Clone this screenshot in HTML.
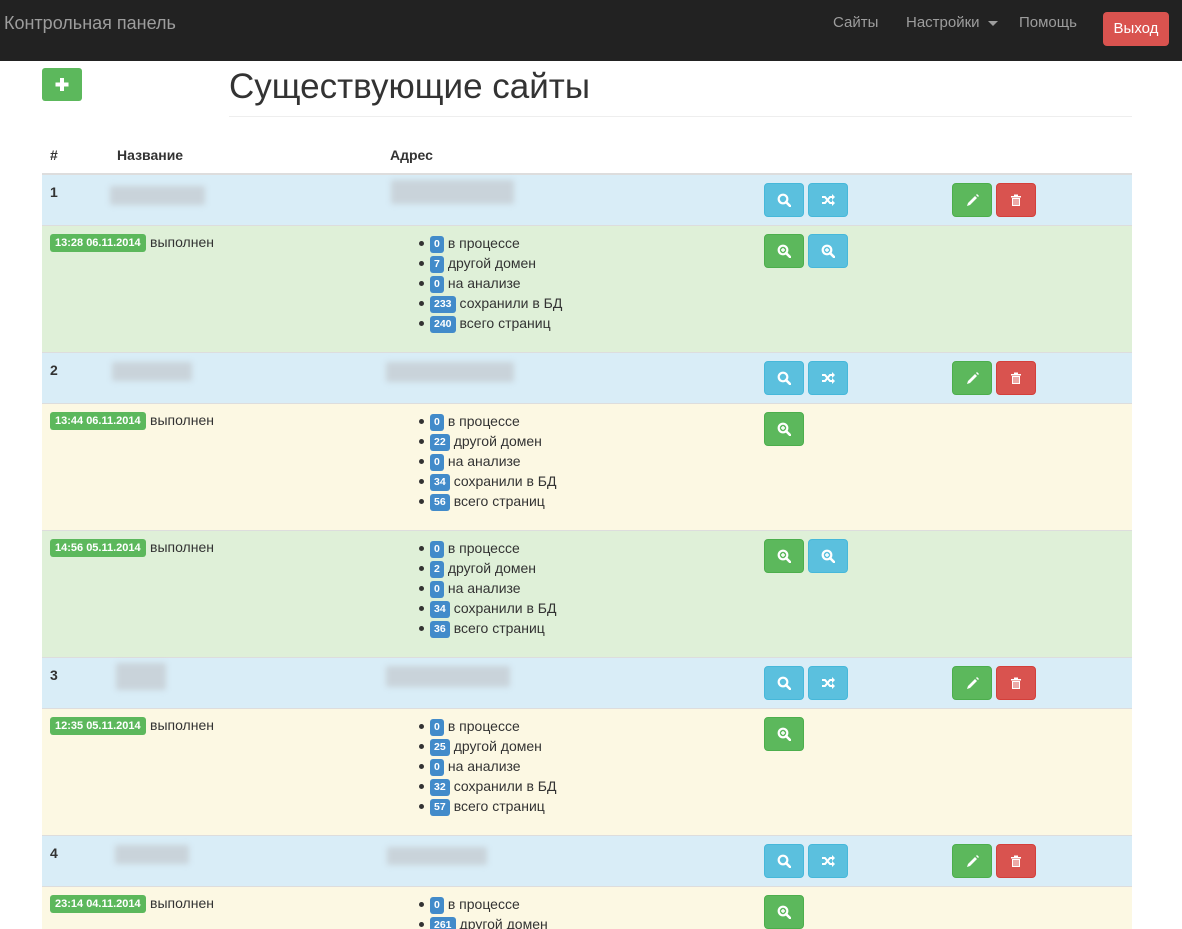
<!DOCTYPE html>
<html><head><meta charset="utf-8"><style>
*{box-sizing:border-box;margin:0;padding:0}
html,body{width:1182px;height:929px;overflow:hidden}
body{background:#fff;font-family:"Liberation Sans",Arial,sans-serif;font-size:14px;color:#333;position:relative}
.nav{position:absolute;left:0;top:0;width:1182px;height:61px;background:#222}
.nav .brand{position:absolute;left:4px;top:13px;font-size:18px;color:#9d9d9d}
.nav a{position:absolute;top:14px;color:#9d9d9d;font-size:15px}
.exit{position:absolute;left:1103px;top:12px;width:66px;height:34px;background:#d9534f;border-radius:4px;color:#fff;font-size:15px;text-align:center;line-height:34px}
.caret{display:inline-block;border-top:5px solid #9d9d9d;border-left:5px solid transparent;border-right:5px solid transparent;vertical-align:middle;margin-left:4px}
.add{position:absolute;left:42px;top:68px;width:40px;height:33px;background:#5cb85c;border-radius:3px}
h1{position:absolute;left:229px;top:67px;font-size:35px;font-weight:normal;color:#333}
.hr{position:absolute;left:229px;top:116px;width:903px;height:1px;background:#eee}
.th{position:absolute;top:147px;font-weight:bold}
.thline{position:absolute;left:42px;top:173px;width:1090px;height:2px;background:#ddd}
.row{position:absolute;left:42px;width:1090px;border-top:1px solid #ddd}
.info{background:#d9edf7;height:51px}
.ok{background:#dff0d8;height:127px}
.warn{background:#fcf8e3;height:127px}
.num{position:absolute;left:8px;top:9px;font-weight:bold}
.blur{position:absolute;background:#c9d3da;filter:blur(3px);border-radius:2px}
.btn{position:absolute;width:40px;height:34px;border-radius:4px;display:flex;align-items:center;justify-content:center}
.bi{background:#5bc0de;border:1px solid #46b8da}
.bs{background:#5cb85c;border:1px solid #4cae4c}
.bd{background:#d9534f;border:1px solid #d43f3a}
.lab{position:absolute;left:8px;top:8px;background:#5cb85c;color:#fff;font-weight:bold;font-size:11px;padding:3px 5px 3px;border-radius:3px;line-height:12px}
.st{position:absolute;left:108px;top:8px}
ul{position:absolute;left:388px;top:7px;list-style:none}
li{height:20px;line-height:20px;position:relative}
li:before{content:"";position:absolute;left:-11px;top:8px;width:5px;height:5px;border-radius:50%;background:#333}
.b{display:inline-block;background:#428bca;color:#fff;font-weight:bold;font-size:10.5px;border-radius:3px;padding:0 4px;height:17px;line-height:17px;margin-right:4px;vertical-align:1px}
</style></head><body>
<svg width="0" height="0" style="position:absolute"><defs>
<g id="srch"><circle cx="6" cy="6" r="4.3" fill="none" stroke="#fff" stroke-width="2.2"/><path d="M9 9l4 4" stroke="#fff" stroke-width="2.6" stroke-linecap="round"/></g>
<g id="zin"><circle cx="6" cy="6" r="4.3" fill="none" stroke="#fff" stroke-width="2.2"/><path d="M9 9l4 4" stroke="#fff" stroke-width="2.6" stroke-linecap="round"/><path d="M6 4v4M4 6h4" stroke="#fff" stroke-width="1.4"/></g>
<g id="shuf"><path d="M1 4h3l5 6h3M1 10h3l5-6h3" stroke="#fff" stroke-width="2" fill="none"/><path d="M11 1l3 3-3 3zM11 7l3 3-3 3z" fill="#fff"/></g>
<g id="pen"><path d="M2 13l1-3 7-7 2 2-7 7z" fill="#fff"/><path d="M11 2l1-1 2 2-1 1z" fill="#fff"/></g>
<g id="trash"><path d="M2 3h10v1.5H2zM5 1.5h4V3H5z" fill="#fff"/><path d="M3 5h8v8H3z" fill="#fff"/><path d="M5 6v6M7 6v6M9 6v6" stroke="#d9534f" stroke-width="1"/></g>
</defs></svg>

<div class="nav"><div class="brand">Контрольная панель</div>
<a style="left:833px">Сайты</a><a style="left:906px">Настройки <span class="caret"></span></a><a style="left:1019px">Помощь</a>
<div class="exit">Выход</div></div>

<div class="add"><svg width="40" height="33"><path d="M20 10v13M13.5 16.5h13" stroke="#fff" stroke-width="4"/></svg></div>
<h1>Существующие сайты</h1><div class="hr"></div>
<div class="th" style="left:50px">#</div><div class="th" style="left:117px">Название</div><div class="th" style="left:390px">Адрес</div>
<div class="thline"></div>

<div class="row info" style="top:174px"><div class="num">1</div><div class="blur" style="left:68px;top:11px;width:95px;height:19px"></div><div class="blur" style="left:349px;top:5px;width:123px;height:24px"></div>
<div class="btn bi" style="left:722px;top:8px"><svg width="14" height="14"><use href="#srch"/></svg></div>
<div class="btn bi" style="left:766px;top:8px"><svg width="15" height="14"><use href="#shuf"/></svg></div>
<div class="btn bs" style="left:910px;top:8px"><svg width="14" height="14"><use href="#pen"/></svg></div>
<div class="btn bd" style="left:954px;top:8px"><svg width="14" height="14"><use href="#trash"/></svg></div></div>
<div class="row ok" style="top:225px"><span class="lab">13:28 06.11.2014</span><span class="st">выполнен</span>
<ul><li><span class="b">0</span>в процессе</li><li><span class="b">7</span>другой домен</li><li><span class="b">0</span>на анализе</li><li><span class="b">233</span>сохранили в БД</li><li><span class="b">240</span>всего страниц</li></ul>
<div class="btn bs" style="left:722px;top:8px"><svg width="14" height="14"><use href="#zin"/></svg></div>
<div class="btn bi" style="left:766px;top:8px"><svg width="14" height="14"><use href="#zin"/></svg></div></div>

<div class="row info" style="top:352px"><div class="num">2</div><div class="blur" style="left:70px;top:9px;width:80px;height:19px"></div><div class="blur" style="left:344px;top:9px;width:128px;height:20px"></div>
<div class="btn bi" style="left:722px;top:8px"><svg width="14" height="14"><use href="#srch"/></svg></div>
<div class="btn bi" style="left:766px;top:8px"><svg width="15" height="14"><use href="#shuf"/></svg></div>
<div class="btn bs" style="left:910px;top:8px"><svg width="14" height="14"><use href="#pen"/></svg></div>
<div class="btn bd" style="left:954px;top:8px"><svg width="14" height="14"><use href="#trash"/></svg></div></div>
<div class="row warn" style="top:403px"><span class="lab">13:44 06.11.2014</span><span class="st">выполнен</span>
<ul><li><span class="b">0</span>в процессе</li><li><span class="b">22</span>другой домен</li><li><span class="b">0</span>на анализе</li><li><span class="b">34</span>сохранили в БД</li><li><span class="b">56</span>всего страниц</li></ul>
<div class="btn bs" style="left:722px;top:8px"><svg width="14" height="14"><use href="#zin"/></svg></div></div>
<div class="row ok" style="top:530px"><span class="lab">14:56 05.11.2014</span><span class="st">выполнен</span>
<ul><li><span class="b">0</span>в процессе</li><li><span class="b">2</span>другой домен</li><li><span class="b">0</span>на анализе</li><li><span class="b">34</span>сохранили в БД</li><li><span class="b">36</span>всего страниц</li></ul>
<div class="btn bs" style="left:722px;top:8px"><svg width="14" height="14"><use href="#zin"/></svg></div>
<div class="btn bi" style="left:766px;top:8px"><svg width="14" height="14"><use href="#zin"/></svg></div></div>

<div class="row info" style="top:657px"><div class="num">3</div><div class="blur" style="left:74px;top:5px;width:50px;height:27px"></div><div class="blur" style="left:344px;top:8px;width:124px;height:21px"></div>
<div class="btn bi" style="left:722px;top:8px"><svg width="14" height="14"><use href="#srch"/></svg></div>
<div class="btn bi" style="left:766px;top:8px"><svg width="15" height="14"><use href="#shuf"/></svg></div>
<div class="btn bs" style="left:910px;top:8px"><svg width="14" height="14"><use href="#pen"/></svg></div>
<div class="btn bd" style="left:954px;top:8px"><svg width="14" height="14"><use href="#trash"/></svg></div></div>
<div class="row warn" style="top:708px"><span class="lab">12:35 05.11.2014</span><span class="st">выполнен</span>
<ul><li><span class="b">0</span>в процессе</li><li><span class="b">25</span>другой домен</li><li><span class="b">0</span>на анализе</li><li><span class="b">32</span>сохранили в БД</li><li><span class="b">57</span>всего страниц</li></ul>
<div class="btn bs" style="left:722px;top:8px"><svg width="14" height="14"><use href="#zin"/></svg></div></div>

<div class="row info" style="top:835px"><div class="num">4</div><div class="blur" style="left:73px;top:9px;width:74px;height:19px"></div><div class="blur" style="left:345px;top:11px;width:100px;height:18px"></div>
<div class="btn bi" style="left:722px;top:8px"><svg width="14" height="14"><use href="#srch"/></svg></div>
<div class="btn bi" style="left:766px;top:8px"><svg width="15" height="14"><use href="#shuf"/></svg></div>
<div class="btn bs" style="left:910px;top:8px"><svg width="14" height="14"><use href="#pen"/></svg></div>
<div class="btn bd" style="left:954px;top:8px"><svg width="14" height="14"><use href="#trash"/></svg></div></div>
<div class="row warn" style="top:886px;height:43px"><span class="lab">23:14 04.11.2014</span><span class="st">выполнен</span>
<ul><li><span class="b">0</span>в процессе</li><li><span class="b">261</span>другой домен</li></ul>
<div class="btn bs" style="left:722px;top:8px"><svg width="14" height="14"><use href="#zin"/></svg></div></div>
</body></html>
